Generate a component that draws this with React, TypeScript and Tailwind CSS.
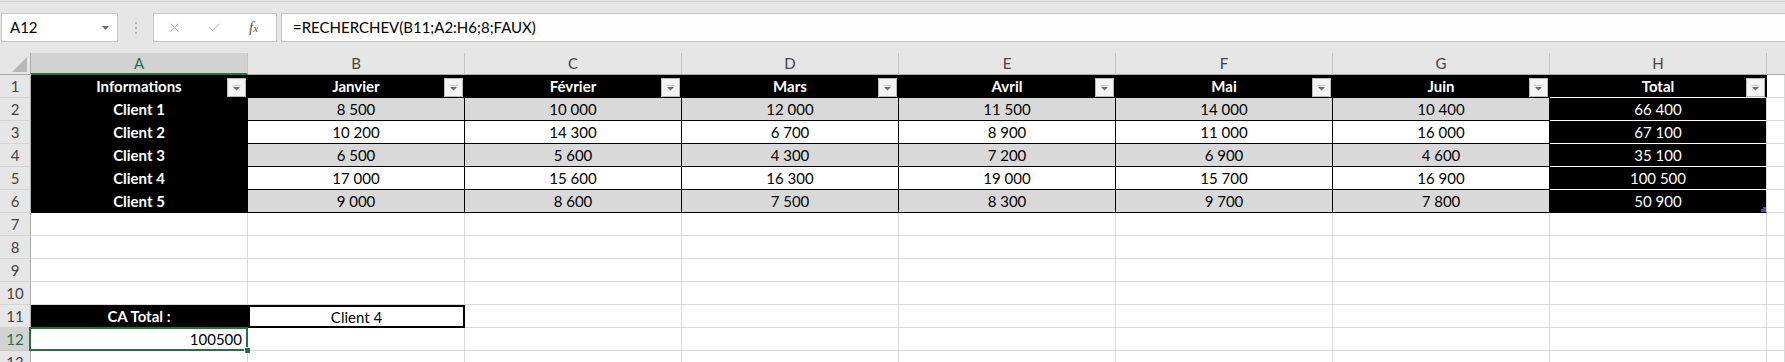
import { Fragment } from "react";
import { Check, X } from "lucide-react";

const cols = ["A", "B", "C", "D", "E", "F", "G", "H"];
const heads = ["Informations", "Janvier", "Février", "Mars", "Avril", "Mai", "Juin", "Total"];
const data = [
  ["Client 1", "8 500", "10 000", "12 000", "11 500", "14 000", "10 400", "66 400"],
  ["Client 2", "10 200", "14 300", "6 700", "8 900", "11 000", "16 000", "67 100"],
  ["Client 3", "6 500", "5 600", "4 300", "7 200", "6 900", "4 600", "35 100"],
  ["Client 4", "17 000", "15 600", "16 300", "19 000", "15 700", "16 900", "100 500"],
  ["Client 5", "9 000", "8 600", "7 500", "8 300", "9 700", "7 800", "50 900"],
];

function FilterButton() {
  return (
    <div className="absolute right-[1px] top-[3px] flex h-[19px] w-[19px] items-center justify-center border border-[#b9b9b9] bg-[#f4f4f4]">
      <svg width="9" height="6" viewBox="0 0 9 6">
        <rect x="0.5" y="0" width="8" height="1" fill="#c4c4c4" />
        <polygon points="1,2 8,2 4.5,5.5" fill="#6c6c6c" />
      </svg>
    </div>
  );
}

function RowHead({ n, active }: { n: number; active?: boolean }) {
  return (
    <div
      className={
        active
          ? "flex items-center justify-center border-r border-b border-r-[#ababab] border-b-[#c6c6c6] bg-[#d2d2d2] pt-[1px] text-[#217346]"
          : "flex items-center justify-center border-r border-b border-r-[#ababab] border-b-[#d4d4d4] bg-[#e6e6e6] pt-[1px] text-[#444]"
      }
    >
      {n}
    </div>
  );
}

function Blank() {
  return <div className="border-r border-b border-[#d9d9d9] bg-white" />;
}

export default function App() {
  return (
    <div className="h-[362px] w-[1785px] overflow-hidden bg-[#e6e6e6] font-['Lato',sans-serif] text-[15px] text-black">
      {/* barre du haut */}
      <div className="h-[13px] pt-[1px]">
        <div className="border-t border-[#d2d2d2]" />
      </div>

      {/* barre de formule */}
      <div className="flex h-[29px] items-stretch">
        <div className="ml-[1px] flex w-[117px] items-center justify-between border border-[#c6c6c6] bg-white pl-[8px] pr-[8px] text-[15px]">
          <span>A12</span>
          <svg width="7" height="4" viewBox="0 0 7 4">
            <polygon points="0,0 7,0 3.5,4" fill="#707070" />
          </svg>
        </div>
        <div className="flex w-[35px] flex-col items-center justify-center gap-[3px]">
          <div className="h-[2px] w-[2px] bg-[#b4b4b4]" />
          <div className="h-[2px] w-[2px] bg-[#b4b4b4]" />
          <div className="h-[2px] w-[2px] bg-[#b4b4b4]" />
        </div>
        <div className="flex w-[124px] items-center border border-[#c6c6c6] bg-white">
          <X size={15} strokeWidth={1.4} className="ml-[13px] text-[#a8a8a8]" />
          <Check size={15} strokeWidth={1.4} className="ml-[25px] text-[#a8a8a8]" />
          <span className="ml-[27px] font-['Liberation_Serif',serif] text-[15px] italic text-[#555]">
            f<span className="text-[11px]">x</span>
          </span>
        </div>
        <div className="ml-[4px] flex flex-1 items-center border-y border-l border-[#c6c6c6] bg-[#fdfdfd] pl-[11px] text-[15px]">
          =RECHERCHEV(B11;A2:H6;8;FAUX)
        </div>
      </div>

      <div className="h-[11px]" />

      {/* feuille */}
      <div className="grid grid-cols-[31px_repeat(8,217px)_1fr] grid-rows-[22px_repeat(13,23px)] text-[15px]">
        {/* en-têtes de colonnes */}
        <div className="relative border-r border-b border-[#ababab] bg-[#e6e6e6]">
          <svg className="absolute bottom-[2px] right-[3px]" width="15" height="15" viewBox="0 0 15 15">
            <polygon points="15,0 15,15 0,15" fill="#b8b8b8" />
          </svg>
        </div>
        {cols.map((c, i) => (
          <div
            key={c}
            className={
              i === 0
                ? "flex items-center justify-center border-r border-b-2 border-r-[#c6c6c6] border-b-[#217346] bg-[#d2d2d2] text-[15px] text-[#217346]"
                : "flex items-center justify-center border-r border-b border-r-[#c6c6c6] border-b-[#ababab] bg-[#e6e6e6] text-[15px] text-[#444]"
            }
          >
            {c}
          </div>
        ))}
        <div className="border-b border-[#ababab] bg-[#e6e6e6]" />

        {/* ligne 1 */}
        <RowHead n={1} />
        {heads.map((h, i) => (
          <div
            key={h}
            className={
              "relative flex items-center justify-center border-r border-b border-r-black bg-black pt-[1px] font-bold text-white " +
              (i === 7 ? "border-b-white" : "border-b-black")
            }
          >
            {h}
            <FilterButton />
          </div>
        ))}
        <Blank />

        {/* lignes 2 à 6 */}
        {data.map((row, r) => (
          <Fragment key={"r" + r}>
            <RowHead n={r + 2} />
            {row.map((v, i) => {
              let cls = "flex items-center justify-center border-r border-b pt-[1px] ";
              if (i === 0) cls += "border-black bg-black font-bold text-white";
              else if (i === 7)
                cls += "relative border-r-[#d9d9d9] bg-black text-white " + (r === 4 ? "border-b-black" : "border-b-white");
              else cls += "border-black " + (r % 2 === 0 ? "bg-[#d9d9d9]" : "bg-white");
              return (
                <div key={i} className={cls}>
                  {v}
                  {i === 7 && r === 4 && (
                    <svg className="absolute bottom-0 right-0" width="5" height="5" viewBox="0 0 5 5">
                      <polygon points="2,0 5,0 5,5 0,5 0,2 2,2" fill="#3f51b5" />
                    </svg>
                  )}
                </div>
              );
            })}
            <Blank />
          </Fragment>
        ))}

        {/* lignes 7 à 10 */}
        {[7, 8, 9, 10].map((n) => (
          <Fragment key={"e" + n}>
            <RowHead n={n} />
            {cols.map((c) => (
              <Blank key={c} />
            ))}
            <Blank />
          </Fragment>
        ))}

        {/* ligne 11 */}
        <RowHead n={11} />
        <div className="flex items-center justify-center border-r border-b border-black bg-black pt-[1px] font-bold text-white">
          CA Total :
        </div>
        <div className="flex items-center justify-center border-2 border-black bg-white pt-[1px]">Client 4</div>
        {cols.slice(2).map((c) => (
          <Blank key={c + 11} />
        ))}
        <Blank />

        {/* ligne 12 */}
        <RowHead n={12} active />
        <div className="relative flex items-center justify-end border-r border-b border-[#d9d9d9] bg-white pr-[5px] pt-[1px]">
          100500
          <div className="absolute -left-[2px] -top-[1px] -right-[1px] -bottom-[1px] border-2 border-[#217346]" />
          <div className="absolute -bottom-[4px] -right-[4px] h-[7px] w-[7px] border border-white bg-[#217346]" />
        </div>
        {cols.slice(1).map((c) => (
          <Blank key={c + 12} />
        ))}
        <Blank />

        {/* ligne 13 */}
        <RowHead n={13} />
        {cols.map((c) => (
          <Blank key={c + 13} />
        ))}
        <Blank />
      </div>
    </div>
  );
}
